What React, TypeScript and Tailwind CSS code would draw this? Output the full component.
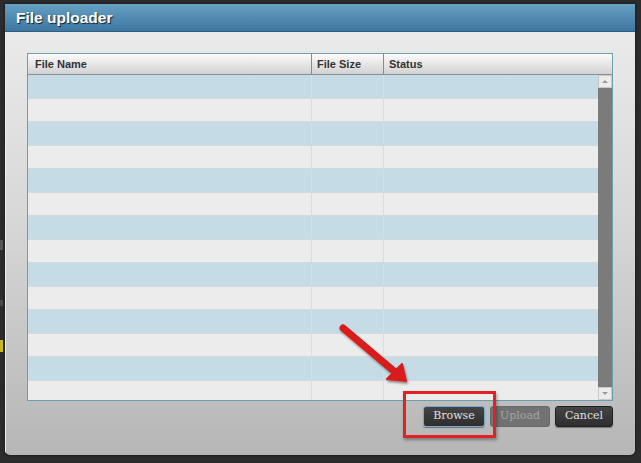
import React from "react";

const rows = Array.from({ length: 14 }, (_, i) => i);

export default function App() {
  return (
    <div className="relative w-[641px] h-[463px] overflow-hidden bg-[#2c2c2c] pt-[4px] pl-[5px]" style={{ fontFamily: '"Liberation Sans", Arial, sans-serif' }}>
      {/* background bits */}
      <div className="absolute left-0 top-[340px] w-[3px] h-[12px] bg-[#c8b820]" />
      <div className="absolute left-0 top-[240px] w-[3px] h-[10px] bg-[#555]" />
      <div className="absolute left-0 top-[300px] w-[3px] h-[6px] bg-[#4a4a4a]" />

      <div className="w-[630px] h-[451px] flex flex-col rounded-b-[5px] overflow-hidden bg-gradient-to-b from-[#ededed] via-[#d6d6d6] to-[#b6b6b6] shadow-[0_0_3px_rgba(0,0,0,0.6)]">
        {/* title bar */}
        <div className="h-[28px] shrink-0 flex items-center pl-[11px] bg-gradient-to-b from-[#66a0c4] to-[#3e77a0] border-b border-[#2f5f80]">
          <span className="text-white font-bold text-[15.5px] [text-shadow:1px_1px_1px_rgba(0,0,0,0.75)]">File uploader</span>
        </div>

        {/* body */}
        <div className="flex-1 flex flex-col pt-[21px] pl-[21px] pr-[22px] border-l border-[#f0f0f0]">
          {/* table */}
          <div className="w-[586px] h-[348px] flex flex-col border border-[#6a9fb0] bg-[#ececec]">
            {/* header */}
            <div className="h-[21px] shrink-0 flex bg-gradient-to-b from-[#fbfbfb] to-[#d2d2d2] border-b border-[#8c8c8c] text-[11px] font-bold text-[#333]">
              <div className="w-[283px] flex items-center pl-[7px]">File Name</div>
              <div className="w-[72px] flex items-center pl-[5px] border-l border-[#8a8a8a]">File Size</div>
              <div className="flex-1 flex items-center pl-[5px] border-l border-[#8a8a8a]">Status</div>
            </div>
            {/* rows + scrollbar */}
            <div className="flex-1 flex overflow-hidden">
              <div className="flex-1 overflow-hidden">
                {rows.map((i) => (
                  <div
                    key={i}
                    className={`h-[23.5px] flex border-b border-[#d4d9dc] ${i % 2 === 0 ? "bg-[#c5dce6]" : "bg-[#ececec]"}`}
                  >
                    <div className="w-[283px]" />
                    <div className="w-[72px] border-l border-[#dcdcdc]" />
                    <div className="flex-1 border-l border-[#dcdcdc]" />
                  </div>
                ))}
              </div>
              {/* scrollbar */}
              <div className="w-[14px] flex flex-col bg-[#7b7b7b]">
                <div className="h-[13px] flex items-center justify-center bg-[#ececec] border border-[#c8c8c8]">
                  <div className="w-0 h-0 border-l-[3px] border-r-[3px] border-b-[3px] border-l-transparent border-r-transparent border-b-[#9a9a9a]" />
                </div>
                <div className="flex-1" />
                <div className="h-[13px] flex items-center justify-center bg-[#ececec] border border-[#c8c8c8]">
                  <div className="w-0 h-0 border-l-[3px] border-r-[3px] border-t-[3px] border-l-transparent border-r-transparent border-t-[#9a9a9a]" />
                </div>
              </div>
            </div>
          </div>

          {/* buttons */}
          <div className="flex justify-end gap-[5px] mt-[5px]" style={{ fontFamily: '"DejaVu Serif", serif' }}>
            <button className="w-[62px] h-[21px] rounded-[3px] bg-gradient-to-b from-[#444] to-[#2e2e2e] border border-[#78a8d8] text-[11px] text-[#e0e0e0] shadow-[0_1px_1px_rgba(0,0,0,0.4)]">Browse</button>
            <button className="w-[60px] h-[21px] rounded-[3px] bg-[#727272] border border-[#6a6a6a] text-[11px] text-[#a4a4a4]">Upload</button>
            <button className="w-[58px] h-[21px] rounded-[3px] bg-gradient-to-b from-[#444] to-[#2e2e2e] border border-[#222] text-[11px] text-[#e0e0e0] shadow-[0_1px_1px_rgba(0,0,0,0.4)]">Cancel</button>
          </div>
        </div>
      </div>

      {/* red highlight box */}
      <div className="absolute left-[403px] top-[391px] w-[93px] h-[47px] border-[3px] border-[#e02222] shadow-[1px_2px_3px_rgba(0,0,0,0.35)]" />

      {/* red arrow */}
      <svg className="absolute left-[335px] top-[320px]" width="80" height="70" viewBox="0 0 80 70">
        <defs>
          <filter id="sh" x="-20%" y="-20%" width="150%" height="150%">
            <feDropShadow dx="1" dy="2" stdDeviation="1.2" floodColor="#000" floodOpacity="0.4" />
          </filter>
        </defs>
        <g filter="url(#sh)">
          <line x1="8" y1="8" x2="60" y2="52" stroke="#d81e1e" strokeWidth="7" strokeLinecap="round" />
          <polygon points="71,61 52,59 67,44" fill="#d81e1e" stroke="#d81e1e" strokeWidth="2" strokeLinejoin="round" />
        </g>
      </svg>
    </div>
  );
}
